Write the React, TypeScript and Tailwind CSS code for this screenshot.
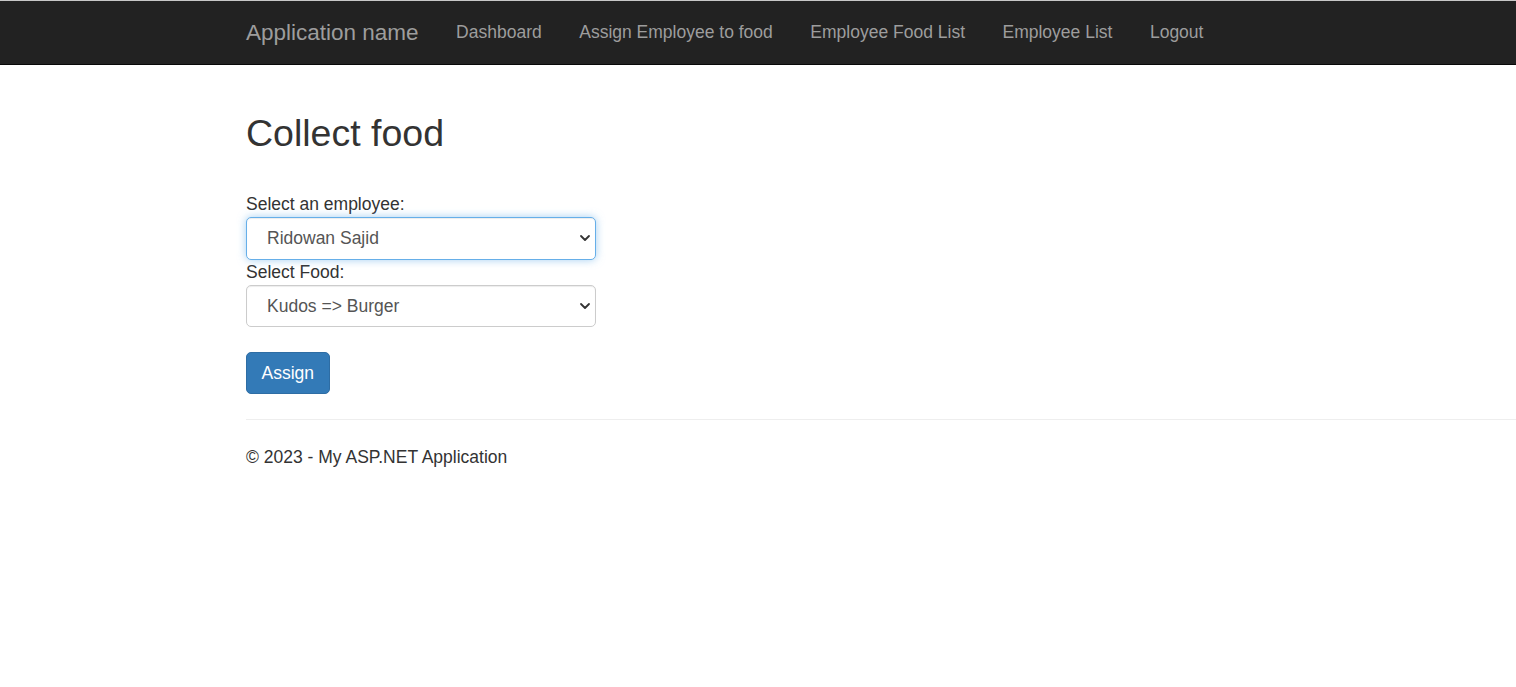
const navLinks = ['Dashboard', 'Assign Employee to food', 'Employee Food List', 'Employee List', 'Logout']

function Chevron() {
  return (
    <svg width="12" height="12" viewBox="0 0 12 12" className="pointer-events-none absolute right-[5px] top-1/2 -translate-y-1/2">
      <path d="M2 4 L6 8 L10 4" fill="none" stroke="#333" strokeWidth="1.8" strokeLinecap="round" strokeLinejoin="round" />
    </svg>
  )
}

function SelectBox({ value, focused }: { value: string; focused?: boolean }) {
  return (
    <div className="relative w-[350px]">
      <select
        defaultValue={value}
        className={
          'block h-[42.5px] w-full appearance-none rounded-[5px] border bg-white pl-[20px] pr-8 text-[17.5px] text-[#555] outline-none ' +
          (focused
            ? 'border-[#66afe9] shadow-[inset_0_1px_1px_rgba(0,0,0,0.075),0_0_8px_rgba(102,175,233,0.6)]'
            : 'border-[#ccc] shadow-[inset_0_1px_1px_rgba(0,0,0,0.075)]')
        }
      >
        <option>{value}</option>
      </select>
      <Chevron />
    </div>
  )
}

export default function App() {
  return (
    <div className="min-h-[687px] bg-white font-['Liberation_Sans',Arial,sans-serif] text-[17.5px] text-[#333]">
      <nav className="h-[65px] border-t border-t-[#c8c8c8] border-b border-b-[#080808] bg-[#222]">
        <div className="flex h-[63px] items-center pl-[227.25px]">
          <a className="px-[18.75px] text-[22.5px] text-[#9d9d9d]">Application name</a>
          {navLinks.map(l => (
            <a key={l} className="px-[18.75px] text-[17.5px] text-[#9d9d9d]">
              {l}
            </a>
          ))}
        </div>
      </nav>

      <div className="pl-[246px]">
        <h2 className="mt-[48px] text-[37.5px] leading-[41px] font-normal">Collect food</h2>

        <form className="mt-[38px]">
          <label className="block leading-[25px]">Select an employee:</label>
          <SelectBox value="Ridowan Sajid" focused />
          <label className="block leading-[25px]">Select Food:</label>
          <SelectBox value="Kudos => Burger" />
          <button
            type="button"
            className="mt-[25px] h-[42px] rounded-[5px] border border-[#2e6da4] bg-[#337ab7] px-[14.5px] text-[17.5px] text-white"
          >
            Assign
          </button>
        </form>

        <hr className="mt-[25px] mb-[25px] border-t border-[#eee]" />

        <footer>
          <p className="leading-[25px]">© 2023 - My ASP.NET Application</p>
        </footer>
      </div>
    </div>
  )
}
